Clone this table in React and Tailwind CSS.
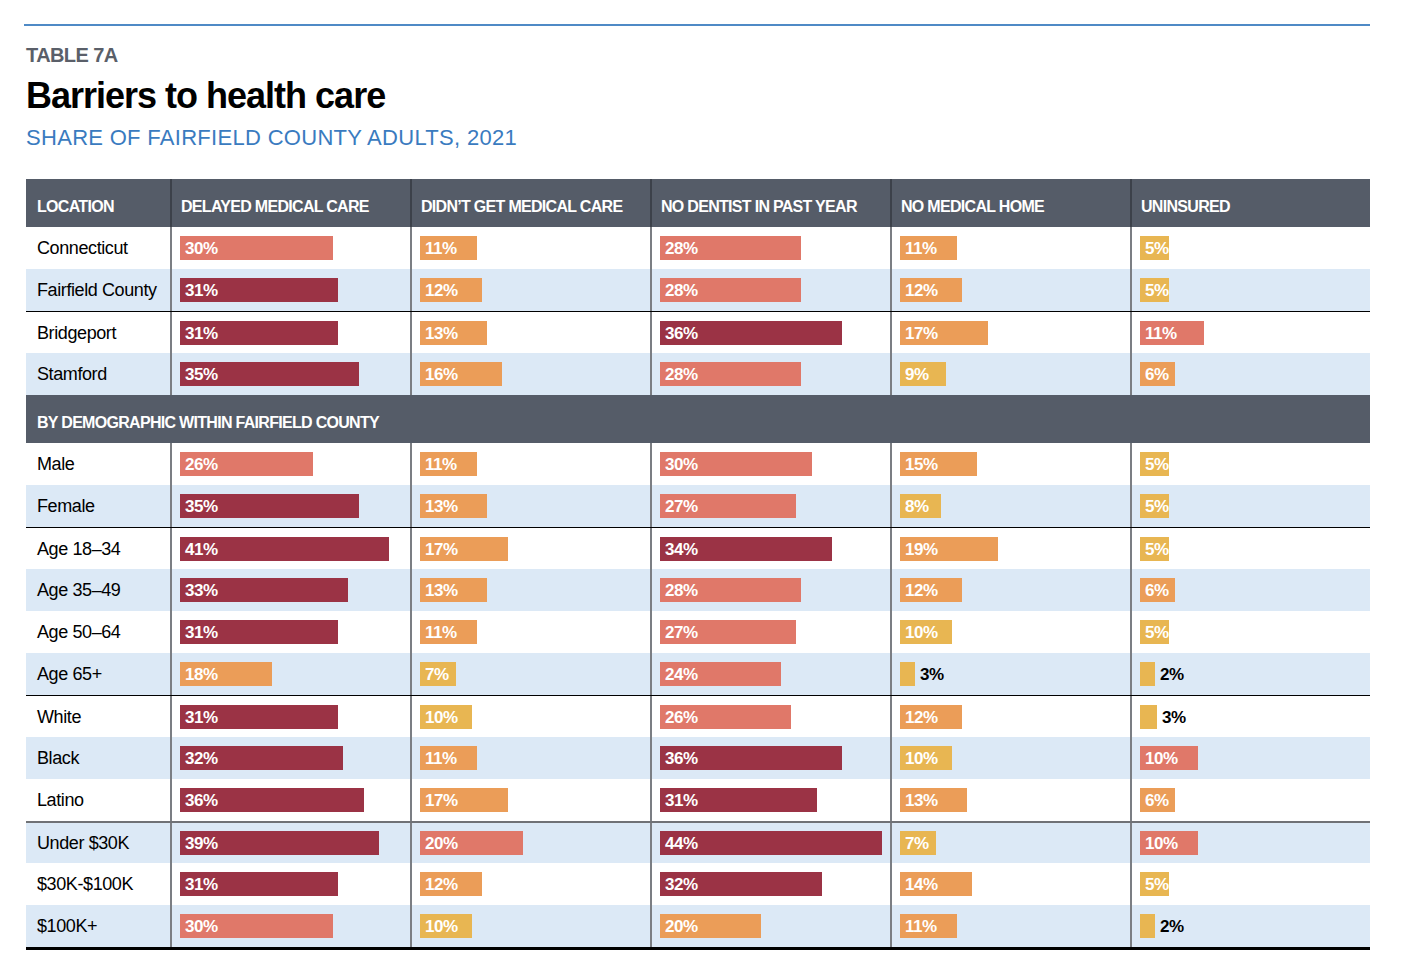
const BAR = {
  D: "bg-[#9b3345]",
  S: "bg-[#e07869]",
  O: "bg-[#eb9d58]",
  Y: "bg-[#e8b652]",
};

const SCALE = [5.1, 5.15, 5.05, 5.15, 5.8];

const columns = [
  "Delayed medical care",
  "Didn’t get medical care",
  "No dentist in past year",
  "No medical home",
  "Uninsured",
];

const locations = [
  { name: "Connecticut", cells: [[30, "S"], [11, "O"], [28, "S"], [11, "O"], [5, "Y"]] },
  { name: "Fairfield County", cells: [[31, "D"], [12, "O"], [28, "S"], [12, "O"], [5, "Y"]] },
  { name: "Bridgeport", line: "black", cells: [[31, "D"], [13, "O"], [36, "D"], [17, "O"], [11, "S"]] },
  { name: "Stamford", cells: [[35, "D"], [16, "O"], [28, "S"], [9, "Y"], [6, "O"]] },
];

const demographics = [
  { name: "Male", cells: [[26, "S"], [11, "O"], [30, "S"], [15, "O"], [5, "Y"]] },
  { name: "Female", cells: [[35, "D"], [13, "O"], [27, "S"], [8, "Y"], [5, "Y"]] },
  { name: "Age 18–34", line: "black", cells: [[41, "D"], [17, "O"], [34, "D"], [19, "O"], [5, "Y"]] },
  { name: "Age 35–49", cells: [[33, "D"], [13, "O"], [28, "S"], [12, "O"], [6, "O"]] },
  { name: "Age 50–64", cells: [[31, "D"], [11, "O"], [27, "S"], [10, "Y"], [5, "Y"]] },
  { name: "Age 65+", cells: [[18, "O"], [7, "Y"], [24, "S"], [3, "Y"], [2, "Y"]] },
  { name: "White", line: "black", cells: [[31, "D"], [10, "Y"], [26, "S"], [12, "O"], [3, "Y"]] },
  { name: "Black", cells: [[32, "D"], [11, "O"], [36, "D"], [10, "Y"], [10, "S"]] },
  { name: "Latino", cells: [[36, "D"], [17, "O"], [31, "D"], [13, "O"], [6, "O"]] },
  { name: "Under $30K", line: "gray", cells: [[39, "D"], [20, "S"], [44, "D"], [7, "Y"], [10, "S"]] },
  { name: "$30K-$100K", cells: [[31, "D"], [12, "O"], [32, "D"], [14, "O"], [5, "Y"]] },
  { name: "$100K+", cells: [[30, "S"], [10, "Y"], [20, "O"], [11, "O"], [2, "Y"]] },
];

function Bar({ value, color, col }) {
  const width = Math.max(Math.round(value * SCALE[col]), 15);
  const inside = value > 3;
  return (
    <div className="flex items-center">
      <div
        className={`h-[24px] flex items-center ${BAR[color]}`}
        style={{ width }}
      >
        {inside && (
          <span className="pl-[5px] pt-[1px] text-[17px] font-bold leading-none tracking-[-0.5px] text-white whitespace-nowrap">
            {value}%
          </span>
        )}
      </div>
      {!inside && (
        <span className="pl-[5px] pt-[1px] text-[17px] font-bold leading-none tracking-[-0.5px] text-black">
          {value}%
        </span>
      )}
    </div>
  );
}

function Row({ row, index }) {
  const shade = index % 2 === 1 ? "bg-[#dce9f6]" : "bg-white";
  const line =
    row.line === "black"
      ? "border-t border-black"
      : row.line === "gray"
      ? "border-t-2 border-[#707276]"
      : "";
  return (
    <div className={`grid grid-cols-[144px_repeat(5,240px)] h-[42px] ${shade} ${line}`}>
      <div className="flex items-center pl-[11px] pt-[1px] text-[18px] tracking-[-0.4px] text-black">
        {row.name}
      </div>
      {row.cells.map(([value, color], i) => (
        <div key={i} className="flex items-center pl-[8px] border-l-2 border-[#7b7e83]">
          <Bar value={value} color={color} col={i} />
        </div>
      ))}
    </div>
  );
}

export default function App() {
  return (
    <div className="min-h-screen bg-white font-['Liberation_Sans',Arial,sans-serif] pt-[24px]">
      <div className="ml-[24px] w-[1346px] h-[2px] bg-[#4f8ac6]" />
      <div className="ml-[26px] w-[1344px]">
        <div className="mt-[17px] text-[20px] font-bold leading-[24px] text-[#5a5f69] tracking-[-0.6px]">
          TABLE 7A
        </div>
        <h1 className="mt-[9px] text-[36px] font-bold leading-[40px] tracking-[-1px] text-black">
          Barriers to health care
        </h1>
        <div className="mt-[9px] text-[22px] leading-[26px] tracking-[0.3px] text-[#3a7bbf]">
          SHARE OF FAIRFIELD COUNTY ADULTS, 2021
        </div>

        <div className="mt-[28px] border-b-[3px] border-black">
          <div className="grid grid-cols-[144px_repeat(5,240px)] h-[48px] bg-[#555c68]">
            <div className="flex items-center pt-[8px] pl-[11px] text-[16px] font-bold uppercase tracking-[-0.7px] text-white whitespace-nowrap">
              Location
            </div>
            {columns.map((c) => (
              <div
                key={c}
                className="flex items-center pt-[8px] pl-[9px] border-l-2 border-[#3c414a] text-[16px] font-bold uppercase tracking-[-0.7px] text-white whitespace-nowrap"
              >
                {c}
              </div>
            ))}
          </div>

          {locations.map((row, i) => (
            <Row key={row.name} row={row} index={i} />
          ))}

          <div className="flex items-center h-[48px] pt-[8px] pl-[11px] bg-[#555c68] text-[16px] font-bold uppercase tracking-[-0.7px] text-white">
            By demographic within Fairfield County
          </div>

          {demographics.map((row, i) => (
            <Row key={row.name} row={row} index={i} />
          ))}
        </div>
      </div>
    </div>
  );
}
